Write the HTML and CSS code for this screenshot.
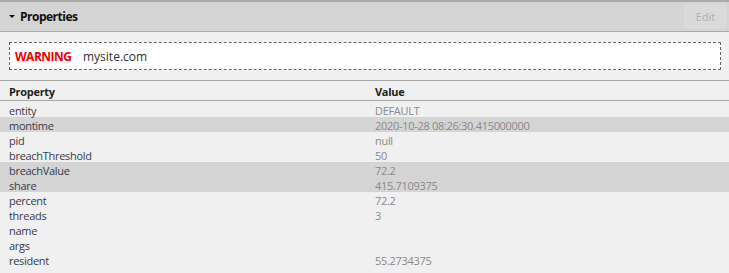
FILE: index.html
```html
<!DOCTYPE html>
<html lang="en">
<head>
    <meta charset="UTF-8">
    <title>Properties</title>
    <link rel="stylesheet" href="styles.css">
</head>
<body>
    <!-- panel header -->
    <div class="panel-header">
        <div class="panel-title">
            <span class="caret"></span>
            Properties
        </div>
        <button class="edit-btn" disabled>Edit</button>
    </div>

    <!-- alert line -->
    <div class="alert-box">
        <span class="level">WARNING</span>
        <span class="host">mysite.com</span>
    </div>

    <!-- property table -->
    <table class="props">
        <thead>
            <tr><th>Property</th><th>Value</th></tr>
        </thead>
        <tbody>
            <tr><td>entity</td><td>DEFAULT</td></tr>
            <tr class="hl"><td>montime</td><td>2020-10-28 08:26:30.415000000</td></tr>
            <tr><td>pid</td><td>null</td></tr>
            <tr><td>breachThreshold</td><td>50</td></tr>
            <tr class="hl"><td>breachValue</td><td>72.2</td></tr>
            <tr class="hl"><td>share</td><td>415.7109375</td></tr>
            <tr><td>percent</td><td>72.2</td></tr>
            <tr><td>threads</td><td>3</td></tr>
            <tr><td>name</td><td></td></tr>
            <tr><td>args</td><td></td></tr>
            <tr><td>resident</td><td>55.2734375</td></tr>
        </tbody>
    </table>
</body>
</html>
```

FILE: styles.css
```css
/* general */
body {
    margin: 0;
    background: #f0f0f0;
    font-family: 'Open Sans', 'Noto Sans', sans-serif;
    color: #333;
    height: 273px;
    overflow: hidden;
}

/* header bar */
.panel-header {
    display: flex;
    align-items: center;
    justify-content: space-between;
    height: 29px;
    background: #d4d4d4;
    border-top: 2px solid #ababab;
    border-bottom: 1px solid #ababab;
    padding: 0 2px 0 9px;
}

.panel-title {
    display: flex;
    align-items: center;
    font-size: 12px;
    font-weight: bold;
    letter-spacing: -0.5px;
    color: #111;
}

.caret {
    width: 0;
    height: 0;
    border-left: 3px solid transparent;
    border-right: 3px solid transparent;
    border-top: 3px solid #111;
    margin-right: 5px;
}

.edit-btn {
    width: 43px;
    height: 25px;
    background: #dadada;
    border: none;
    border-radius: 2px;
    color: #b0b0b0;
    font-family: inherit;
    font-size: 11px;
    padding: 0;
}

/* alert */
.alert-box {
    display: flex;
    align-items: center;
    height: 26px;
    margin: 10px 8px 10px 9px;
    background: #fff;
    border: 1px dashed #666;
    padding: 0 5px;
    font-size: 12px;
}

.level {
    color: #ee0000;
    font-weight: bold;
    letter-spacing: -0.5px;
    width: 68px;
}

.host {
    color: #333;
}

/* table */
.props {
    width: 100%;
    border-collapse: collapse;
    border-top: 1px solid #a8a8a8;
    font-size: 11px;
    letter-spacing: -0.3px;
}

.props th {
    text-align: left;
    font-weight: bold;
    color: #222;
    height: 18px;
    padding: 1px 9px 0;
    border-bottom: 1px solid #a8a8a8;
}

.props th:last-child {
    padding-left: 0;
}

.props td {
    height: 13px;
    padding: 2px 9px 0;
    line-height: 13px;
    color: #3a3a4a;
}

.props td:first-child {
    width: 357px;
}

.props td:last-child {
    padding-left: 0;
    color: #8a8a8a;
}

.props tr.hl td {
    background: #d4d4d4;
}

.props tbody tr:first-child td {
    padding-top: 3px;
}
```
